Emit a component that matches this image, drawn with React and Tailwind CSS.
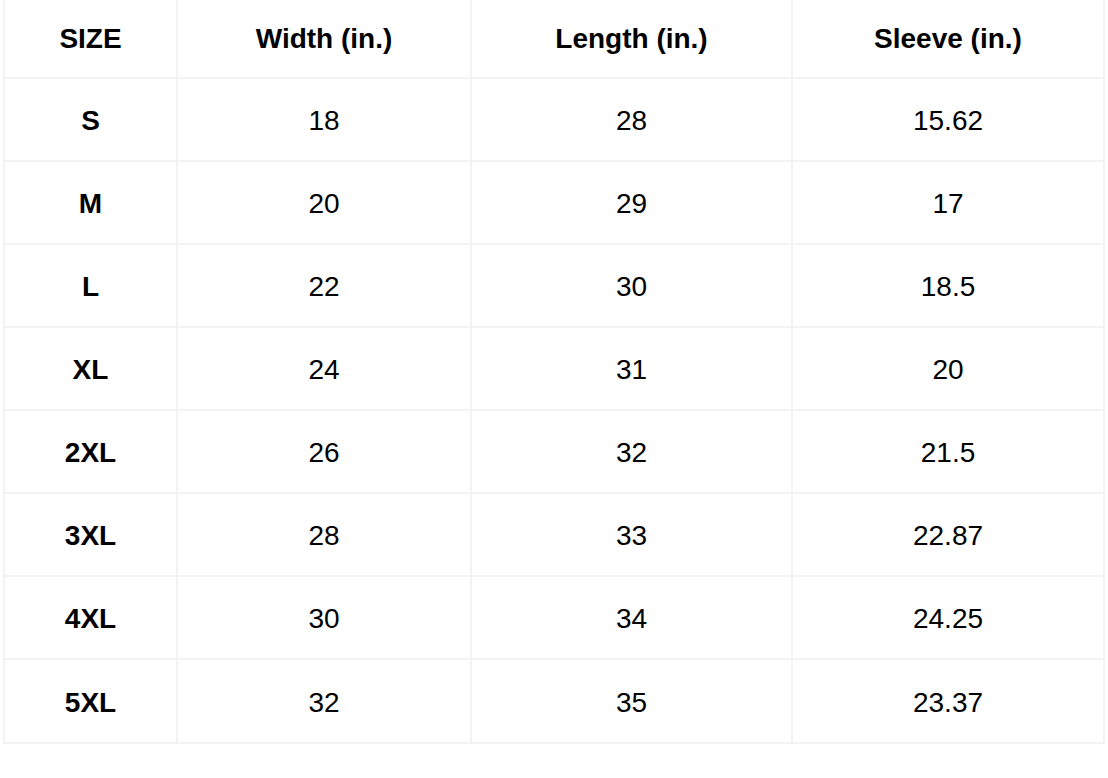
const headers = ['SIZE', 'Width (in.)', 'Length (in.)', 'Sleeve (in.)'];

const rows = [
  ['S', '18', '28', '15.62'],
  ['M', '20', '29', '17'],
  ['L', '22', '30', '18.5'],
  ['XL', '24', '31', '20'],
  ['2XL', '26', '32', '21.5'],
  ['3XL', '28', '33', '22.87'],
  ['4XL', '30', '34', '24.25'],
  ['5XL', '32', '35', '23.37'],
];

const widths = ['w-[173px]', 'w-[294px]', 'w-[321px]', 'w-[312px]'];

export default function App() {
  return (
    <div className="w-[1108px] h-[778px] bg-white pl-[3px] font-['Liberation_Sans',Arial,sans-serif] text-black">
      <table className="table-fixed border-separate border-spacing-0 border-l-2 border-[#f3f3f3] w-[1102px]">
        <thead>
          <tr className="h-[79px]">
            {headers.map((h, i) => (
              <th
                key={h}
                className={`${widths[i]} border-r-2 border-b-2 border-[#f3f3f3] text-center align-middle text-[28px] font-bold p-0`}
              >
                {h}
              </th>
            ))}
          </tr>
        </thead>
        <tbody>
          {rows.map((r, ri) => (
            <tr key={r[0]} className={ri === rows.length - 1 ? 'h-[84px]' : 'h-[83px]'}>
              {r.map((c, i) => (
                <td
                  key={i}
                  className={`border-r-2 border-b-2 border-[#f3f3f3] text-center align-middle text-[28px] p-0 pt-[3px] ${
                    i === 0 ? 'font-bold' : 'font-normal'
                  }`}
                >
                  {c}
                </td>
              ))}
            </tr>
          ))}
        </tbody>
      </table>
    </div>
  );
}
